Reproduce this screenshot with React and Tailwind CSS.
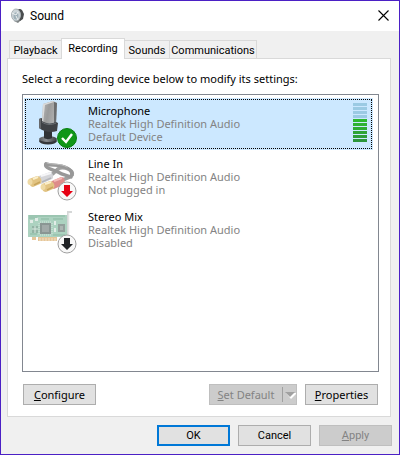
import React from 'react';

function MicIcon() {
  return (
    <svg width="48" height="48" viewBox="0 0 48 48" aria-hidden="true">
      <defs>
        <linearGradient id="micHead" x1="0" x2="1" y1="0" y2="0.3">
          <stop offset="0" stopColor="#b8b8b8" />
          <stop offset="0.5" stopColor="#9a9a9a" />
          <stop offset="1" stopColor="#b0b0b0" />
        </linearGradient>
        <linearGradient id="micBase" x1="0" x2="1">
          <stop offset="0" stopColor="#55585b" />
          <stop offset="0.4" stopColor="#8b8e91" />
          <stop offset="1" stopColor="#3b3d40" />
        </linearGradient>
      </defs>
      <ellipse cx="21" cy="41" rx="9" ry="3.5" fill="#35373a" />
      <ellipse cx="21" cy="39" rx="9" ry="3" fill="url(#micBase)" />
      <path d="M17 30h8v8c-2 1.500-6 1.500-8 0z" fill="#303235" />
      <path d="M16 4l10-3 4 2-1 21-14-1z" fill="url(#micHead)" />
      <path d="M27 2l3 1-1 21h-2z" fill="#6b6d6f" />
      <path d="M16 4l10-3 1 1-9 3-2 18h-1z" fill="#dadada" />
      <path d="M12 19l3-1v3c4 3 10 3 14 1l2 1-1 8c-6 2-13 1-18-3z" fill="#3f4145" />
      <path d="M12 19l2-1v11l-2-1z" fill="#66686b" />
      <path d="M15 22c4 3 10 3 14 1" fill="none" stroke="#6e7175" />
    </svg>
  );
}

function CableIcon() {
  return (
    <svg width="48" height="48" viewBox="0 0 48 48" aria-hidden="true">
      <g fill="none" strokeLinecap="round">
        <path d="M32 28C38 25 41 27 45 22C47 17 38 14 33 15C29 16 28 20 24 22" stroke="#a0a0a0" strokeWidth="3.500" />
        <path d="M19 11C17 15 25 16 31 19C36 22 39 22 44 24" stroke="#989898" strokeWidth="3.500" />
        <path d="M19 11C25 13 33 11 40 15C44 17 45 19 45 22" stroke="#989898" strokeWidth="3.500" />
        <path d="M20 10C26 12 33 10 40 14" stroke="#bdbdbd" strokeWidth="1" />
      </g>
      <path d="M12 23l11-4c3 0 4 6 2 7l-11 5c-3 0-4-6-2-8z" fill="#d4d5d9" />
      <path d="M14 23l10-3" stroke="#f5f5f7" strokeWidth="2" />
      <path d="M15 29l9-4" stroke="#b3b5bb" strokeWidth="1.500" />
      <path d="M2 26l8-3c4 0 6 6 3 8l-7 3c-3 0-5-5-4-8z" fill="#e2c483" />
      <path d="M6 26l5-2" stroke="#fbefcb" strokeWidth="2" />
      <path d="M7 32l6-3" stroke="#c8a55c" strokeWidth="1.500" />
      <ellipse cx="3" cy="29" rx="2.500" ry="3" fill="#efdaa5" />
      <path d="M25 28l9-4c4 0 5 6 2 8l-9 4c-3 0-4-6-2-8z" fill="#de8c8a" />
      <path d="M27 28l8-3" stroke="#f3bbb8" strokeWidth="2" />
      <path d="M15 31l8-3c4 0 6 6 3 8l-7 3c-4 0-5-5-4-8z" fill="#e2c483" />
      <path d="M18 31l6-2" stroke="#fbefcb" strokeWidth="2" />
      <path d="M20 37l6-3" stroke="#c8a55c" strokeWidth="1.500" />
      <ellipse cx="16" cy="34" rx="2.500" ry="3" fill="#efdaa5" />
    </svg>
  );
}

function CardIcon() {
  return (
    <svg width="48" height="48" viewBox="0 0 48 48" aria-hidden="true">
      <path d="M1 9h39v22H1z" fill="#acd2c0" />
      <path d="M2 10h36M2 12h8M14 13h8M26 13h10M3 28h7M26 29h12" stroke="#8bb9a3" />
      <path d="M5 31h4v3H5zM11 31h19v4H11z" fill="#e5c699" />
      <path d="M13 32v3M16 32v3M19 32v3M22 32v3M25 32v3M28 32v3" stroke="#f4e2c8" />
      <path d="M13 17h11v11H13z" fill="#8a9693" />
      <path d="M15 19h7v7h-7z" fill="#a1aaa8" />
      <path d="M12 17v11M25 17v11M13 16h11M13 29h11" stroke="#d7e6de" strokeDasharray="1 1" />
      <path d="M31 18h7v8h-7z" fill="#93a09c" />
      <path d="M33 20h3v4h-3z" fill="#adb6b3" />
      <path d="M3 14h3v3H3zM8 12h3v3H8zM27 15h2v4h-2zM27 22h2v4h-2z" fill="#e2ece7" />
      <path d="M5 20h6v7H5z" fill="#93b4a5" />
      <path d="M8 20v7M5 23h6" stroke="#d9e9e1" />
      <path d="M45 6h-4v29" fill="none" stroke="#d5d7d7" strokeWidth="2" />
      <path d="M42 7v28" stroke="#efefef" />
    </svg>
  );
}

function Badge({ kind }) {
  return (
    <svg className="absolute left-[30px] top-7" width="20" height="20" viewBox="0 0 20 20" aria-hidden="true">
      {kind === 'check' ? (
        <>
          <circle cx="10" cy="10" r="9.500" fill="#109618" stroke="#087f10" />
          <path d="M5 10l4 4 6-8" fill="none" stroke="#fff" strokeWidth="2.400" />
        </>
      ) : (
        <>
          <circle cx="10" cy="10" r="9" fill="#f8f8f8" stroke="#a0a0a0" />
          <path
            d="M7 4h6v6h3l-6 6-6-6h3z"
            fill={kind === 'unplugged' ? '#e60012' : '#202326'}
          />
        </>
      )}
    </svg>
  );
}

const devices = [
  { name: 'Microphone', status: 'Default Device', badge: 'check', Icon: MicIcon, selected: true },
  { name: 'Line In', status: 'Not plugged in', badge: 'unplugged', Icon: CableIcon },
  { name: 'Stereo Mix', status: 'Disabled', badge: 'disabled', Icon: CardIcon },
];

const meter = [
  'bg-[#9bcae3]',
  'bg-[#9bcae3]',
  'bg-[#9bcae3]',
  'bg-[#9bcae3]',
  'bg-[#2db82f]',
  'bg-[#2eb233]',
  'bg-[#2eac34]',
  'bg-[#2ea436]',
  'bg-[#2d9d38]',
  'bg-[#2b963a]',
];

function Device({ device }) {
  const { name, status, badge, Icon, selected } = device;
  return (
    <li role="option" aria-selected={!!selected} className={selected ? 'bg-[#cce8ff] p-px' : 'p-px'}>
      <div
        className={
          selected
            ? 'flex h-[50px] border border-dotted border-black'
            : 'flex h-[50px] border border-transparent'
        }
      >
        <div className="relative ml-px h-12 w-[52px] shrink-0">
          <Icon />
          <Badge kind={badge} />
        </div>
        <div className="ml-[9px] min-w-0 flex-1 pt-1 leading-[13px]">
          <p>{name}</p>
          <p className="text-[#838383]">Realtek High Definition Audio</p>
          <p className="text-[#838383]">{status}</p>
        </div>
        {selected && (
          <div className="mr-1 mt-[3px] flex w-3.5 flex-col gap-px" role="img" aria-label="Input level">
            {meter.map((color, i) => (
              <span key={i} className={`h-[3px] ${color}`} />
            ))}
          </div>
        )}
      </div>
    </li>
  );
}

const buttonBase = 'h-[21px] w-[73px] border text-center leading-[19px]';
const buttonNormal = 'border-[#adadad] bg-[#e1e1e1] text-black';
const buttonDisabled = 'border-[#bfbfbf] bg-[#cccccc] text-[#838383]';
const tabIdle = 'h-[18px] border border-b-0 border-[#d9d9d9] bg-[#f0f0f0] leading-[19px]';
const compactFont = "font-['Roboto','Open_Sans',sans-serif]";

export default function App() {
  return (
    <main className="flex min-h-screen flex-col border border-[#4b20c5] bg-[#f0f0f0] font-['Noto_Sans','Open_Sans',sans-serif] text-[11px] text-black">
      <header className={`flex h-[30px] items-center bg-white pl-[9px] pr-[10px] ${compactFont}`}>
        <svg width="16" height="16" viewBox="0 0 16 16" aria-hidden="true">
          <path d="M6 1l5 0 2 4-1 6-4 4-4-2z" fill="#7d8182" />
          <path d="M9 1l3 1 2 4-1 5-3 2-2-5z" fill="#4a4d4f" />
          <ellipse cx="6" cy="7" rx="4.500" ry="6" fill="#ccd4d8" stroke="#a9b1b5" />
          <ellipse cx="6" cy="8" rx="2.500" ry="3.500" fill="#9fb0b8" />
          <path d="M2 5l4 2 2-3M6 8l2 4" fill="none" stroke="#edf0f1" />
        </svg>
        <h1 className="ml-1 flex-1 text-[12px]">Sound</h1>
        <button type="button" aria-label="Close" className="flex h-3 w-3 items-center justify-center pb-0.5">
          <svg width="11" height="11" viewBox="0 0 11 11" className="shrink-0">
            <path d="M.5.5l10 10M10.500.5l-10 10" stroke="#000" strokeWidth="1.100" />
          </svg>
        </button>
      </header>

      <div className="flex flex-1 flex-col pb-2 pl-[6px] pr-[7px] pt-[7px]">
        <div role="tablist" className={`flex items-end pl-0.5 ${compactFont}`}>
          <button type="button" role="tab" aria-selected="false" className={`${tabIdle} w-[52px] border-r-0`}>
            Playback
          </button>
          <button
            type="button"
            role="tab"
            aria-selected="true"
            className="relative z-10 -mb-px h-[21px] w-[64px] border border-b-0 border-[#d9d9d9] bg-white leading-[18px]"
          >
            Recording
          </button>
          <button type="button" role="tab" aria-selected="false" className={`${tabIdle} w-[45px] border-l-0`}>
            Sounds
          </button>
          <button type="button" role="tab" aria-selected="false" className={`${tabIdle} w-[87px] border-l-0`}>
            Communications
          </button>
        </div>

        <section role="tabpanel" className="mr-px flex flex-1 flex-col border border-[#d9d9d9] bg-white pb-[11px] pl-3.5 pr-[11px] pt-3">
          <p id="device-label" className="leading-[15px]">
            Select a recording device below to modify its settings:
          </p>
          <ul
            role="listbox"
            aria-labelledby="device-label"
            className="mt-2 flex flex-1 flex-col gap-px border border-[#828790] py-[3px] pl-px pr-[5px]"
          >
            {devices.map((device) => (
              <Device key={device.name} device={device} />
            ))}
          </ul>
          <div className="mt-3 flex justify-between px-px">
            <button type="button" className={`${buttonBase} ${buttonNormal}`}>
              <span className="underline">C</span>onfigure
            </button>
            <div className="flex gap-2">
              <div className="flex h-[21px] w-[88px] border border-[#bfbfbf] bg-[#cccccc] text-[#838383]">
                <button type="button" disabled className="flex-1 leading-[19px]">
                  <span className="underline">S</span>et Default
                </button>
                <button
                  type="button"
                  disabled
                  aria-label="More default options"
                  className="my-0.5 flex w-[14px] items-center justify-center border-l border-[#a0a0a0]"
                >
                  <svg width="12" height="8" viewBox="0 0 12 8" className="shrink-0">
                    <path d="M2 2h10v1L7 8z" fill="#fff" />
                    <path d="M1 1h10L6 6z" fill="#a0a0a0" />
                  </svg>
                </button>
              </div>
              <button type="button" className={`${buttonBase} ${buttonNormal}`}>
                <span className="underline">P</span>roperties
              </button>
            </div>
          </div>
        </section>

        <footer className={`mt-2 flex justify-end gap-2 ${compactFont}`}>
          <button
            type="button"
            className="h-[21px] w-[73px] border-2 border-[#0078d7] bg-[#e1e1e1] text-center leading-[17px]"
          >
            OK
          </button>
          <button type="button" className={`${buttonBase} ${buttonNormal}`}>
            Cancel
          </button>
          <button type="button" disabled className={`${buttonBase} ${buttonDisabled}`}>
            <span className="underline">A</span>pply
          </button>
        </footer>
      </div>
    </main>
  );
}
